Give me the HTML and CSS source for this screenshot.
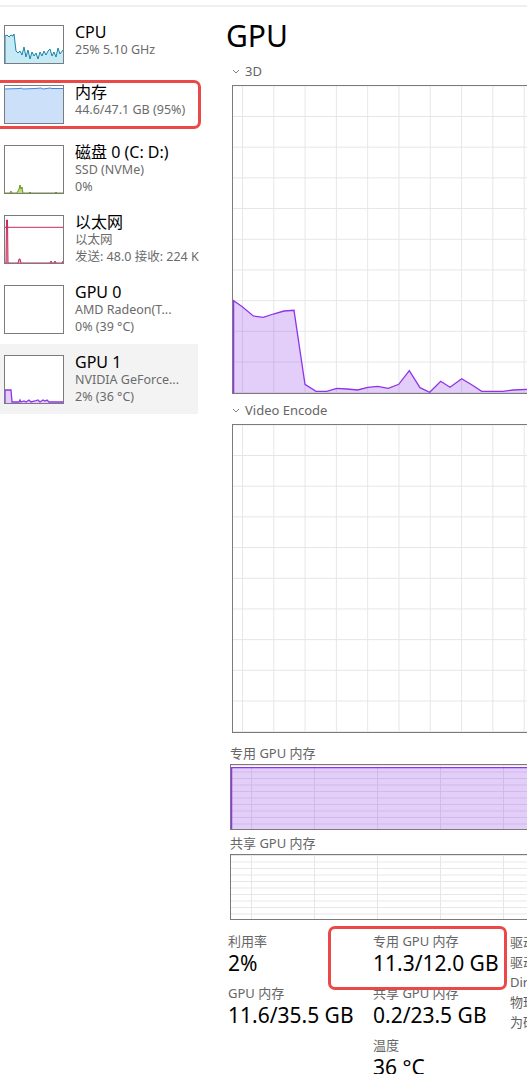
FILE: index.html
```html
<!DOCTYPE html>
<html lang="zh-CN">
<head>
  <meta charset="UTF-8">
  <title>任务管理器 - GPU</title>
  <link rel="stylesheet" href="styles.css">
</head>
<body>
<div class="page">
  <div class="topline"></div>

  <div class="layout">
    <!-- 左侧设备列表 -->
    <nav class="sidebar">
      <div class="item">
        <div class="thumb">
          <svg viewBox="0 0 58 37" preserveAspectRatio="none">
            <polygon class="cpu-fill" points="0,37 0,10 2,9 4,11 6,9 8,10 9,8 11,25 13,27 15,25 17,29 19,21 21,31 23,24 25,33 27,26 29,30 31,27 33,33 35,26 37,30 39,25 41,29 43,25 45,23 47,30 49,26 51,31 53,22 55,28 58,24 58,37"/>
            <polyline class="cpu-line" points="0,37 0,10 2,9 4,11 6,9 8,10 9,8 11,25 13,27 15,25 17,29 19,21 21,31 23,24 25,33 27,26 29,30 31,27 33,33 35,26 37,30 39,25 41,29 43,25 45,23 47,30 49,26 51,31 53,22 55,28 58,24"/>
          </svg>
        </div>
        <div class="info">
          <div class="name">CPU</div>
          <div class="sub">25% 5.10 GHz</div>
        </div>
      </div>

      <div class="item">
        <div class="thumb">
          <svg viewBox="0 0 58 37" preserveAspectRatio="none">
            <polygon class="mem-fill" points="0,37 0,3 15,2.5 16,2 18,3 30,2.5 36,2 38,3 45,2 47,2.5 58,2.5 58,37"/>
            <polyline class="mem-line" points="0,3 15,2.5 16,2 18,3 30,2.5 36,2 38,3 45,2 47,2.5 58,2.5"/>
          </svg>
        </div>
        <div class="info">
          <div class="name">内存</div>
          <div class="sub">44.6/47.1 GB (95%)</div>
        </div>
      </div>

      <div class="item">
        <div class="thumb tall">
          <svg viewBox="0 0 58 47" preserveAspectRatio="none">
            <polygon class="disk-fill" points="0,47 5,47 6,45 7,47 12,47 13,45 14,43 15,39 16,43 17,41 18,47 24,47 25,46 26,47 50,47 51,46 52,47"/>
            <polyline class="disk-line" points="0,47 5,47 6,45 7,47 12,47 13,45 14,43 15,39 16,43 17,41 18,47 24,47 25,46 26,47 50,47 51,46 52,47 58,47"/>
          </svg>
        </div>
        <div class="info">
          <div class="name">磁盘 0 (C: D:)</div>
          <div class="sub">SSD (NVMe)</div>
          <div class="sub">0%</div>
        </div>
      </div>

      <div class="item">
        <div class="thumb tall">
          <svg viewBox="0 0 58 47" preserveAspectRatio="none">
            <line class="net-line" x1="0" y1="11.3" x2="58" y2="11.3"/>
            <polygon class="net-fill" points="1,47 1.5,4 2.5,4 3,47 13,47 14,43 15,43 16,47 45,47 46,45 47,47 49,47 50,45 51,47 57,47 58,45 58,47"/>
            <polyline class="net-line" points="0,47 1,47 1.5,4 2.5,4 3,47 13,47 14,43 15,43 16,47 45,47 46,45 47,47 49,47 50,45 51,47 57,47 58,45"/>
          </svg>
        </div>
        <div class="info">
          <div class="name">以太网</div>
          <div class="sub">以太网</div>
          <div class="sub">发送: 48.0 接收: 224 K</div>
        </div>
      </div>

      <div class="item">
        <div class="thumb tall"></div>
        <div class="info">
          <div class="name">GPU 0</div>
          <div class="sub">AMD Radeon(T...</div>
          <div class="sub">0% (39 °C)</div>
        </div>
      </div>

      <div class="item active">
        <div class="thumb tall">
          <svg viewBox="0 0 58 47" preserveAspectRatio="none">
            <polygon class="gpu-fill" points="0,47 0,34 6,34 7,46 14,46 15,44 16,46 19,45 21,46 24,44 26,46 30,45 33,44 35,46 38,44 40,45 42,44 44,46 58,46 58,47"/>
            <polyline class="gpu-line" points="0,47 0,34 6,34 7,46 14,46 15,44 16,46 19,45 21,46 24,44 26,46 30,45 33,44 35,46 38,44 40,45 42,44 44,46 58,46"/>
          </svg>
        </div>
        <div class="info">
          <div class="name">GPU 1</div>
          <div class="sub">NVIDIA GeForce...</div>
          <div class="sub">2% (36 °C)</div>
        </div>
      </div>
    </nav>

    <!-- 右侧 GPU 详情 -->
    <main class="main">
      <h1 class="title">GPU</h1>

      <div class="section-label">
        <svg class="chevron" viewBox="0 0 8 5"><polyline points="1,1 4,4 7,1"/></svg>
        <span>3D</span>
      </div>
      <div class="graph">
        <svg viewBox="0 0 320 307" preserveAspectRatio="none">
          <polygon class="gpu-fill" points="0,307 0,214.7 9.3,220.7 20.3,230 30.3,231.3 40.3,228 51,225 61,224.3 72,298.3 83,305.3 93.7,305.3 103.7,302.3 113.7,303 124.7,304 134.7,301.3 144.7,300.3 155.3,302.3 165.7,298.3 176.3,284.7 187,301.7 196.7,306.3 207.7,295.3 217,301.3 228.7,292.7 238.7,298.7 248.7,305.3 258.7,305.3 269.7,305.3 280.3,304 294,303.3 320,303 320,307"/>
          <polyline class="gpu-line" points="0.6,307 0.6,214.7 9.3,220.7 20.3,230 30.3,231.3 40.3,228 51,225 61,224.3 72,298.3 83,305.3 93.7,305.3 103.7,302.3 113.7,303 124.7,304 134.7,301.3 144.7,300.3 155.3,302.3 165.7,298.3 176.3,284.7 187,301.7 196.7,306.3 207.7,295.3 217,301.3 228.7,292.7 238.7,298.7 248.7,305.3 258.7,305.3 269.7,305.3 280.3,304 294,303.3 320,303"/>
        </svg>
      </div>

      <div class="section-label">
        <svg class="chevron" viewBox="0 0 8 5"><polyline points="1,1 4,4 7,1"/></svg>
        <span>Video Encode</span>
      </div>
      <div class="graph"></div>

      <div class="mem-label">专用 GPU 内存</div>
      <div class="mem-graph">
        <svg viewBox="0 0 320 64" preserveAspectRatio="none">
          <polygon class="gpu-fill" points="0,64 0,2.7 8,2.7 10,2 14,2 16,2.7 62,2.7 64,2 72,2 74,2.7 89,2.7 91,2 100,2 102,2.7 188,2.7 190,2 202,2 204,2.7 236,2.7 238,2 248,2 250,2.7 320,2.7 320,64"/>
          <polyline class="gpu-line" points="0.6,64 0.6,2.7 320,2.7"/>
        </svg>
      </div>

      <div class="mem-label shared">共享 GPU 内存</div>
      <div class="mem-graph"></div>

      <div class="stats">
        <div class="stat-col">
          <div class="stat">
            <div class="stat-label">利用率</div>
            <div class="stat-value">2%</div>
          </div>
          <div class="stat">
            <div class="stat-label">GPU 内存</div>
            <div class="stat-value">11.6/35.5 GB</div>
          </div>
        </div>
        <div class="stat-col">
          <div class="stat">
            <div class="stat-label">专用 GPU 内存</div>
            <div class="stat-value">11.3/12.0 GB</div>
          </div>
          <div class="stat">
            <div class="stat-label">共享 GPU 内存</div>
            <div class="stat-value">0.2/23.5 GB</div>
          </div>
          <div class="stat">
            <div class="stat-label">温度</div>
            <div class="stat-value">36 °C</div>
          </div>
        </div>
        <div class="details">
          <div>驱动程序版本:</div>
          <div>驱动程序日期:</div>
          <div>DirectX 版本:</div>
          <div>物理位置:</div>
          <div>为硬件保留的内存:</div>
        </div>
      </div>
    </main>
  </div>

  <!-- 红色标注框 -->
  <div class="mark mark-side"></div>
  <div class="mark mark-stat"></div>
</div>
</body>
</html>
```

FILE: styles.css
```css
body {
  margin: 0;
  background: #fff;
  color: #000;
  font-family: "Noto Sans", "Noto Sans CJK SC", sans-serif;
  overflow: hidden;
}

.page {
  position: relative;
  width: 527px;
  height: 1074px;
  overflow: hidden;
}

.topline {
  height: 5px;
  border-bottom: 2px solid #efefef;
}

.layout {
  display: flex;
  width: 600px;
}

/* 侧栏 */
.sidebar {
  flex: none;
  width: 198px;
  padding-top: 7px;
}

.item {
  display: flex;
  gap: 11px;
  padding: 11px 0 10px 4px;
}

.item.active {
  background: #f3f3f3;
}

.thumb {
  flex: none;
  width: 58px;
  height: 37px;
  border: 1px solid #7b7b7b;
  background: #fff;
}

.thumb.tall {
  height: 47px;
}

.thumb svg {
  display: block;
  width: 100%;
  height: 100%;
}

.info {
  margin: -2px 0 -4px;
  white-space: nowrap;
}

.name {
  font-size: 16px;
  line-height: 18px;
}

.sub {
  font-size: 12.5px;
  line-height: 17px;
  color: #6b6b6b;
}

.cpu-fill { fill: #c6eaf6; }
.cpu-line { fill: none; stroke: #1b84a8; stroke-width: 1; }
.mem-fill { fill: #cce0fa; }
.mem-line { fill: none; stroke: #3f86de; stroke-width: 1; }
.disk-fill { fill: #bcd88e; }
.disk-line { fill: none; stroke: #6d9b1c; stroke-width: 1; }
.net-fill { fill: #f0a9bd; }
.net-line { fill: none; stroke: #c8285a; stroke-width: 1; }
.gpu-fill { fill: #8c2ee6; fill-opacity: 0.24; }
.gpu-line { fill: none; stroke: #9034ec; stroke-width: 1.3; }

/* 主区域 */
.main {
  flex: none;
  width: 360px;
  padding-left: 28px;
}

.title {
  margin: 11px 0 0;
  font-size: 30px;
  line-height: 36px;
  font-weight: normal;
}

.section-label {
  display: flex;
  align-items: center;
  gap: 5px;
  margin: 8px 0 0 6px;
  font-size: 13px;
  line-height: 18px;
  color: #666;
}

.chevron {
  width: 8px;
  height: 5px;
}

.chevron polyline {
  fill: none;
  stroke: #808080;
  stroke-width: 1;
}

.graph {
  margin: 5px 0 0 6px;
  width: 320px;
  height: 307px;
  border: 1px solid #7a7a7a;
  background-image:
    linear-gradient(to right, #e6e6e6 1px, transparent 1px),
    linear-gradient(to bottom, #e6e6e6 1px, transparent 1px);
  background-size: 31.3px 30.7px;
  background-position: 9px 30px;
}

.graph + .section-label {
  margin-top: 7px;
}

.graph svg,
.mem-graph svg {
  display: block;
  width: 100%;
  height: 100%;
}

.mem-label {
  margin: 11px 0 0 4px;
  font-size: 13px;
  line-height: 18px;
  color: #666;
}

.mem-label.shared {
  margin-top: 4px;
}

.mem-graph {
  margin: 2px 0 0 4px;
  width: 320px;
  height: 64px;
  border: 1px solid #7a7a7a;
  background-image:
    linear-gradient(to right, #e6e6e6 1px, transparent 1px),
    linear-gradient(to bottom, #e6e6e6 1px, transparent 1px);
  background-size: 63px 6.5px;
  background-position: 20px 0;
}

/* 统计数值 */
.stats {
  display: grid;
  grid-template-columns: 145px 137px auto;
  margin: 13px 0 0 2px;
}

.stat {
  margin-bottom: 9px;
}

.stat-label {
  font-size: 13px;
  line-height: 17px;
  color: #666;
}

.stat-value {
  font-size: 21px;
  line-height: 26px;
}

.details {
  margin-top: -1px;
  font-size: 13px;
  line-height: 20px;
  color: #5f5f5f;
  white-space: nowrap;
}

/* 红色标注框 */
.mark {
  position: absolute;
  box-sizing: border-box;
  border: 3px solid #eb4848;
  border-radius: 7px;
}

.mark-side {
  left: -8px;
  top: 80px;
  width: 209px;
  height: 49px;
}

.mark-stat {
  left: 328px;
  top: 926px;
  width: 179px;
  height: 64px;
}
```
